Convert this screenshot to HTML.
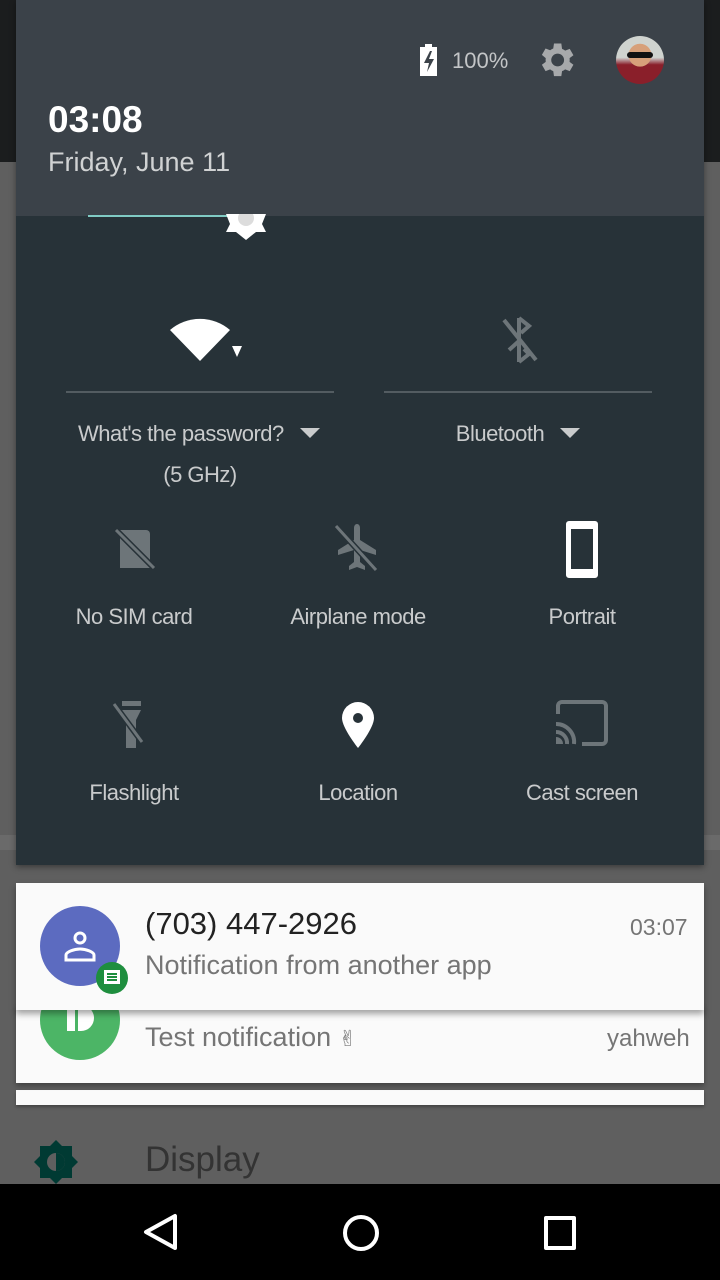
<!DOCTYPE html>
<html><head><meta charset="utf-8"><style>
body{margin:0;width:720px;height:1280px;position:relative;overflow:hidden;background:#5f5f5f;font-family:"Liberation Sans",sans-serif}
.a{position:absolute}
.t{position:absolute;white-space:nowrap}
.c{position:absolute;white-space:nowrap;text-align:center;width:240px;font-size:22px;color:#c9cbcc;letter-spacing:-.5px}
</style></head><body>
<div class="a" style="left:0;top:0;width:720px;height:162px;background:#1b1d1e"></div>
<div class="a" style="left:0;top:835px;width:720px;height:15px;background:#6a6a6a"></div>
<div class="a" style="left:16px;top:0;width:688px;height:865px;background:#273238;box-shadow:0 2px 6px rgba(0,0,0,.4)"></div>
<div class="a" style="left:16px;top:0;width:688px;height:216px;background:#3b4249"></div>
<svg class="a" style="left:418px;top:44px" width="22" height="32" viewBox="0 0 22 32"><path d="M7 0h7v3h5v29H2V3h5z" fill="#fff"/><path d="M12 7l-6 12h5l-2 9 7-13h-5l3-8z" fill="#3b4249"/></svg>
<div class="t" style="left:452px;top:48px;font-size:22px;color:#c3c5c7">100%</div>
<svg class="a" style="left:534px;top:38px" width="44" height="44" viewBox="0 0 24 24"><path fill="#a7a9ab" d="M19.4 13a7.5 7.5 0 0 0 0-2l2.1-1.6-2-3.5-2.5 1a7 7 0 0 0-1.7-1L14.9 3h-4l-.4 2.7a7 7 0 0 0-1.7 1l-2.5-1-2 3.5L6.4 11a7.5 7.5 0 0 0 0 2l-2.1 1.6 2 3.5 2.5-1a7 7 0 0 0 1.7 1l.4 2.7h4l.4-2.7a7 7 0 0 0 1.7-1l2.5 1 2-3.5zM12.9 15.5a3.5 3.5 0 1 1 0-7 3.5 3.5 0 0 1 0 7z"/></svg>
<div class="a" style="left:616px;top:36px;width:48px;height:48px;border-radius:50%;background:radial-gradient(circle at 50% 40%,#d7a07a 0 30%,transparent 31%),linear-gradient(#cfd3cf 0 45%,#8a1f2a 60%);"></div>
<div class="a" style="left:627px;top:52px;width:26px;height:6px;background:#111;border-radius:3px"></div>
<div class="t" style="left:48px;top:99px;font-size:37px;font-weight:bold;color:#fff">03:08</div>
<div class="t" style="left:48px;top:147px;font-size:27px;color:#d0d2d3">Friday, June 11</div>
<div class="a" style="left:88px;top:215px;width:140px;height:2px;background:#80cbc4"></div>
<svg class="a" style="left:224px;top:214px" width="44" height="26" viewBox="0 0 44 26"><path d="M2 0h40l-4 10 4 8h-10l-10 8-10-8H2l4-8z" fill="#fff"/><circle cx="22" cy="4" r="8" fill="#dcdcdc"/></svg>
<svg class="a" style="left:170px;top:314px" width="76" height="48" viewBox="0 0 76 48"><path d="M0 16A46 46 0 0 1 60 16L30 47z" fill="#fff"/><path d="M62 32h10l-5 11z" fill="#fff"/></svg>
<svg class="a" style="left:500px;top:316px" width="38" height="48" viewBox="0 0 38 48"><g stroke="#6d7579" stroke-width="4" fill="none"><path d="M4 4l32 40"/><path d="M19 2v44"/><path d="M19 2l10 8-8 7M19 46l10-8-5-5M9 34l10-9"/></g></svg>
<div class="a" style="left:66px;top:391px;width:268px;height:2px;background:#535c61"></div>
<div class="a" style="left:384px;top:391px;width:268px;height:2px;background:#535c61"></div>
<div class="c" style="left:78px;top:421px;width:240px;text-align:left">What's the password?</div>
<svg class="a" style="left:300px;top:428px" width="20" height="12"><path d="M0 0h20L10 10z" fill="#c9cbcc"/></svg>
<div class="c" style="left:80px;top:462px">(5 GHz)</div>
<div class="c" style="left:380px;top:421px;width:240px;text-align:center">Bluetooth</div>
<svg class="a" style="left:560px;top:428px" width="20" height="12"><path d="M0 0h20L10 10z" fill="#c9cbcc"/></svg>
<svg class="a" style="left:110px;top:524px" width="48" height="48" viewBox="0 0 48 48"><path d="M10 6h26a4 4 0 0 1 4 4v34H10z" fill="#6d7579"/><path d="M6 6l38 38" stroke="#273238" stroke-width="6"/><path d="M6 6l38 38" stroke="#6d7579" stroke-width="3"/></svg>
<svg class="a" style="left:332px;top:522px" width="50" height="52" viewBox="0 0 50 52"><path d="M25 2c2 0 3 2 3 4v12l16 10v5L28 28v12l5 4v4l-8-3-8 3v-4l5-4V28L6 33v-5l16-10V6c0-2 1-4 3-4z" fill="#6d7579"/><path d="M4 4l40 44" stroke="#273238" stroke-width="6"/><path d="M4 4l40 44" stroke="#6d7579" stroke-width="3"/></svg>
<div class="a" style="left:566px;top:521px;width:22px;height:40px;border:5px solid #fff;border-top-width:8px;border-bottom-width:9px;border-radius:3px"></div>
<div class="c" style="left:14px;top:604px">No SIM card</div>
<div class="c" style="left:238px;top:604px">Airplane mode</div>
<div class="c" style="left:462px;top:604px">Portrait</div>
<svg class="a" style="left:112px;top:700px" width="44" height="50" viewBox="0 0 44 50"><path d="M10 1h19v5H10zM10 10h19l-5 10v28h-10V20z" fill="#6d7579"/><path d="M2 4l28 38" stroke="#273238" stroke-width="6"/><path d="M2 4l28 38" stroke="#6d7579" stroke-width="3"/></svg>
<svg class="a" style="left:340px;top:700px" width="36" height="50" viewBox="0 0 36 50"><path d="M18 2A16 16 0 0 0 2 18c0 10 16 30 16 30s16-20 16-30A16 16 0 0 0 18 2z" fill="#fff"/><circle cx="18" cy="18" r="5" fill="#273238"/></svg>
<svg class="a" style="left:554px;top:700px" width="56" height="46" viewBox="0 0 56 46"><path d="M4 14V6a4 4 0 0 1 4-4h40a4 4 0 0 1 4 4v34a4 4 0 0 1-4 4H28" stroke="#6d7579" stroke-width="4" fill="none"/><path d="M2 24a18 18 0 0 1 18 20M2 32a11 11 0 0 1 11 12" stroke="#6d7579" stroke-width="4" fill="none"/><path d="M2 37a7 7 0 0 1 7 7H2z" fill="#6d7579"/></svg>
<div class="c" style="left:14px;top:780px">Flashlight</div>
<div class="c" style="left:238px;top:780px">Location</div>
<div class="c" style="left:462px;top:780px">Cast screen</div>
<div class="a" style="left:16px;top:1090px;width:688px;height:15px;background:#fafafa;box-shadow:0 2px 3px rgba(0,0,0,.3)"></div>
<div class="a" style="left:16px;top:1005px;width:688px;height:78px;background:#fafafa;box-shadow:0 3px 5px rgba(0,0,0,.3)"></div>
<div class="a" style="left:40px;top:980px;width:80px;height:80px;border-radius:50%;background:#4cb566"></div>
<div class="a" style="left:67px;top:1005px;width:8px;height:26px;background:#fff"></div>
<div class="a" style="left:78px;top:1005px;width:16px;height:26px;background:#fff;border-radius:0 13px 13px 0"></div>
<div class="t" style="left:145px;top:1022px;font-size:27px;color:#757575">Test notification <span style="font-family:'DejaVu Sans';font-size:22px">✌&#xFE0E;</span></div>
<div class="t" style="left:607px;top:1025px;font-size:24px;color:#757575">yahweh</div>
<div class="a" style="left:16px;top:883px;width:688px;height:127px;background:#fafafa;box-shadow:0 4px 6px rgba(0,0,0,.35)"></div>
<div class="a" style="left:40px;top:906px;width:80px;height:80px;border-radius:50%;background:#5c6bc0"></div>
<svg class="a" style="left:62px;top:928px" width="36" height="36" viewBox="0 0 36 36"><circle cx="18" cy="10" r="5" fill="none" stroke="#fff" stroke-width="3"/><path d="M4 32v-5c0-3 8-6 14-6s14 3 14 6v5z" fill="none" stroke="#fff" stroke-width="3"/></svg>
<div class="a" style="left:96px;top:962px;width:32px;height:32px;border-radius:50%;background:#1e8e3e"></div>
<div class="a" style="left:104px;top:970px;width:16px;height:14px;background:#fff"></div>
<div class="a" style="left:107px;top:973px;width:10px;height:8px;background:repeating-linear-gradient(#1e8e3e 0 2px,#fff 2px 3px)"></div>
<div class="t" style="left:145px;top:906px;font-size:31px;color:#222">(703) 447-2926</div>
<div class="t" style="left:630px;top:914px;font-size:23px;color:#757575">03:07</div>
<div class="t" style="left:145px;top:950px;font-size:27px;color:#757575">Notification from another app</div>
<svg class="a" style="left:34px;top:1140px" width="44" height="44" viewBox="0 0 44 44"><path d="M22 0l6 6h10v10l6 6-6 6v10H28l-6 6-6-6H6V28l-6-6 6-6V6h10z" fill="#003a33"/><circle cx="22" cy="22" r="9" fill="#5f5f5f"/><path d="M22 13a9 9 0 0 1 0 18z" fill="#003a33"/></svg>
<div class="t" style="left:145px;top:1140px;font-size:35px;color:#333">Display</div>
<div class="a" style="left:0;top:1184px;width:720px;height:96px;background:#000"></div>
<svg class="a" style="left:140px;top:1212px" width="40" height="40" viewBox="0 0 40 40"><path d="M35 4v32L6 20z" fill="none" stroke="#fff" stroke-width="4" stroke-linejoin="round"/></svg>
<div class="a" style="left:343px;top:1215px;width:28px;height:28px;border:4px solid #fff;border-radius:50%"></div>
<div class="a" style="left:544px;top:1216px;width:24px;height:26px;border:4px solid #fff;border-radius:2px"></div>
</body></html>
